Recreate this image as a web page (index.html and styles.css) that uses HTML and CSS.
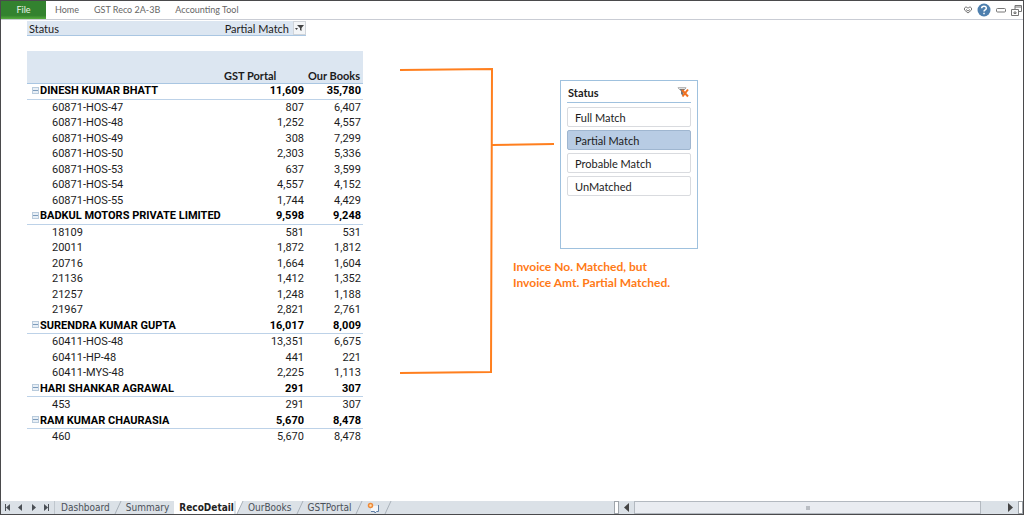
FILE: index.html
```html
<!DOCTYPE html>
<html lang="en">
<head>
<meta charset="utf-8">
<title>GST Reco 2A-3B</title>
<link rel="stylesheet" href="styles.css">
</head>
<body>
<div class="window">
  <header class="ribbon">
    <button class="file">File</button>
    <nav class="menu">
      <button>Home</button>
      <button>GST Reco 2A-3B</button>
      <button>Accounting Tool</button>
    </nav>
    <div class="tools">
      <button aria-label="Minimize ribbon"><svg width="8" height="8" viewBox="0 0 8 8" fill="none" stroke="#777"><path d="M.5 2 2 .8 4 2.200 6 .8 7.500 2V4L4 7 .5 4ZM2 3.500 4 5 6 3.500"/></svg></button>
      <button aria-label="Help"><svg width="14" height="14" viewBox="0 0 14 14"><circle cx="7" cy="7" r="6.500" fill="#4d7fae"/><path d="M4.700 5.300C4.700 2.500 9.300 2.500 9.300 5.200 9.300 6.900 7 6.700 7 8.500M7 9.700V11.200" fill="none" stroke="#fff" stroke-width="1.500"/></svg></button>
      <button aria-label="Minimize window"><svg width="10" height="6" viewBox="0 0 10 6"><rect x=".5" y="1.500" width="9" height="3.500" rx="1" fill="#fff" stroke="#777"/></svg></button>
      <button aria-label="Restore window"><svg width="11" height="11" viewBox="0 0 11 11" fill="#fff" stroke="#777"><path d="M4 .5H10.500V6.500H4Z"/><path d="M4 2H10.500"/><path d="M.5 4.500H7.500V10.500H.5Z"/><path d="M3 7H5V8.500H3Z"/></svg></button>
    </div>
  </header>

  <main class="sheet">
    <section class="pivot">
      <div class="filter">
        <span>Status</span>
        <span class="value">Partial Match</span>
        <button class="filter-button" aria-label="Filter status"><svg width="9" height="8" viewBox="0 0 9 8" fill="#444"><path d="M2 1H9L6.500 4V7L5 6V4ZM0 4H3L1.500 6Z"/></svg></button>
      </div>
      <table class="report">
        <colgroup><col class="c-name"><col class="c-portal"><col class="c-books"></colgroup>
        <thead><tr><th></th><th class="portal">GST Portal</th><th>Our Books</th></tr></thead>
        <tbody>
          <tr class="group"><th><button aria-label="Collapse"></button>DINESH KUMAR BHATT</th><td>11,609</td><td>35,780</td></tr>
          <tr><th>60871-HOS-47</th><td>807</td><td>6,407</td></tr>
          <tr><th>60871-HOS-48</th><td>1,252</td><td>4,557</td></tr>
          <tr><th>60871-HOS-49</th><td>308</td><td>7,299</td></tr>
          <tr><th>60871-HOS-50</th><td>2,303</td><td>5,336</td></tr>
          <tr><th>60871-HOS-53</th><td>637</td><td>3,599</td></tr>
          <tr><th>60871-HOS-54</th><td>4,557</td><td>4,152</td></tr>
          <tr><th>60871-HOS-55</th><td>1,744</td><td>4,429</td></tr>
          <tr class="group"><th><button aria-label="Collapse"></button>BADKUL MOTORS PRIVATE LIMITED</th><td>9,598</td><td>9,248</td></tr>
          <tr><th>18109</th><td>581</td><td>531</td></tr>
          <tr><th>20011</th><td>1,872</td><td>1,812</td></tr>
          <tr><th>20716</th><td>1,664</td><td>1,604</td></tr>
          <tr><th>21136</th><td>1,412</td><td>1,352</td></tr>
          <tr><th>21257</th><td>1,248</td><td>1,188</td></tr>
          <tr><th>21967</th><td>2,821</td><td>2,761</td></tr>
          <tr class="group"><th><button aria-label="Collapse"></button>SURENDRA KUMAR GUPTA</th><td>16,017</td><td>8,009</td></tr>
          <tr><th>60411-HOS-48</th><td>13,351</td><td>6,675</td></tr>
          <tr><th>60411-HP-48</th><td>441</td><td>221</td></tr>
          <tr><th>60411-MYS-48</th><td>2,225</td><td>1,113</td></tr>
          <tr class="group"><th><button aria-label="Collapse"></button>HARI SHANKAR AGRAWAL</th><td>291</td><td>307</td></tr>
          <tr><th>453</th><td>291</td><td>307</td></tr>
          <tr class="group"><th><button aria-label="Collapse"></button>RAM KUMAR CHAURASIA</th><td>5,670</td><td>8,478</td></tr>
          <tr><th>460</th><td>5,670</td><td>8,478</td></tr>
        </tbody>
      </table>
    </section>

    <section class="callout">
      <svg class="bracket" width="154" height="308" viewBox="0 0 154 308" fill="none" stroke="#ff7f1e" stroke-width="2"><path d="M0 3 92 2 91 305 0 306M92 78 154 77"/></svg>
      <div class="slicer">
        <div class="slicer-head">
          <h2>Status</h2>
          <button aria-label="Clear filter"><svg width="12" height="12" viewBox="0 0 12 12"><path d="M.5 1.500H9.500L6.500 5V10L4 8V5Z" fill="#777"/><path d="M2 2.500H8" stroke="#ddd"/><path d="M5 4 11 10.500M11 3.500 5.500 10.500" stroke="#f07020" stroke-width="2"/></svg></button>
        </div>
        <button class="item">Full Match</button>
        <button class="item selected" aria-pressed="true">Partial Match</button>
        <button class="item">Probable Match</button>
        <button class="item">UnMatched</button>
      </div>
      <p class="note">Invoice No. Matched, but<br>Invoice Amt. Partial Matched.</p>
    </section>
  </main>

  <footer class="tabbar">
    <div class="steps">
      <button aria-label="First sheet"><svg width="7" height="7" viewBox="0 0 7 7"><path d="M1 0H2V7H1ZM6 0V7L2 3.500Z"/></svg></button>
      <button aria-label="Previous sheet"><svg width="7" height="7" viewBox="0 0 7 7"><path d="M5 0V7L1 3.500Z"/></svg></button>
      <button aria-label="Next sheet"><svg width="7" height="7" viewBox="0 0 7 7"><path d="M2 0V7L6 3.500Z"/></svg></button>
      <button aria-label="Last sheet"><svg width="7" height="7" viewBox="0 0 7 7"><path d="M5 0H6V7H5ZM1 0V7L5 3.500Z"/></svg></button>
    </div>
    <div class="tabs">
      <button>Dashboard</button>
      <svg class="edge" width="8" height="13" viewBox="0 0 8 13"><path d="M1 13 7 0"/></svg>
      <button>Summary</button>
      <button class="active">RecoDetail</button>
      <svg class="edge" width="8" height="13" viewBox="0 0 8 13"><path class="white" d="M0 0H7L1 13H0Z"/><path d="M1 13 7 0"/></svg>
      <button>OurBooks</button>
      <svg class="edge" width="8" height="13" viewBox="0 0 8 13"><path d="M1 13 7 0"/></svg>
      <button>GSTPortal</button>
      <svg class="edge" width="8" height="13" viewBox="0 0 8 13"><path d="M1 13 7 0"/></svg>
      <button class="add" aria-label="Insert sheet"><svg width="13" height="12" viewBox="0 0 13 12"><path d="M4 4H11.500V9.500H10L8 11V9.500H4Z" fill="#f4f7fa"/><path d="M11.500 3V9.500H9.500L8 11 7.500 9.500H4" fill="none" stroke="#5f7fa6"/><circle cx="3.500" cy="3.500" r="2" fill="#ffe0b0" stroke="#ee8a3a" stroke-width="1.500"/></svg></button>
      <svg class="edge" width="8" height="13" viewBox="0 0 8 13"><path d="M1 13 7 0"/></svg>
    </div>
    <div class="scroll">
      <span class="split"></span>
      <button aria-label="Scroll left"><svg width="7" height="9" viewBox="0 0 7 9"><path d="M6 0V9L1 4.500Z"/></svg></button>
      <div class="track"><div class="thumb"><span></span></div></div>
      <button aria-label="Scroll right"><svg width="7" height="9" viewBox="0 0 7 9"><path d="M1 0V9L6 4.500Z"/></svg></button>
      <span class="split"></span>
    </div>
  </footer>
</div>
</body>
</html>
```
FILE: styles.css
```css
* { box-sizing: border-box; }
body { margin: 0; font: 11px/15px Lato, "Noto Sans", sans-serif; color: #1c1c1c; background: #fff; }
button { margin: 0; padding: 0; border: 0; background: none; font: inherit; color: inherit; display: flex; align-items: center; }
svg { display: block; flex: none; }
.window { min-height: 100vh; display: flex; flex-direction: column; border: 1px solid #4a4a4c; }

.ribbon { display: flex; height: 19px; border-bottom: 1px solid #c9ccd4; font: 9px/16px Lato, "Noto Sans", sans-serif; color: #666; }
.file { width: 45px; justify-content: center; background: linear-gradient(#33822f 80%, #55ac3c); color: #e8f3e6; }
.menu { display: flex; gap: 15px; padding-left: 9px; }
.tools { display: flex; align-items: center; gap: 5px; margin-left: auto; padding-right: 1px; }

.sheet { flex: 1; display: flex; align-items: flex-start; padding: 1px 0 0 26px; }
.pivot { width: 336px; flex: none; }
.filter { display: flex; width: 279px; height: 15px; padding-left: 2px; background: #dce6f1; border-bottom: 1px solid #a9c6e2; }
.filter .value { margin-left: auto; }
.filter-button { width: 13px; justify-content: center; margin-left: 4px; background: #f3f5f7; border: 1px solid #d0d4d9; }
.report { width: 100%; height: 394px; margin-top: 15px; border-collapse: collapse; table-layout: fixed; }
.c-portal { width: 84px; }
.c-books { width: 57px; }
.report th, .report td { padding: 0 2px 0 0; text-align: right; font-weight: 400; line-height: 14px; white-space: nowrap; }
.report thead tr { height: 32px; }
.report thead th { padding-right: 3px; background: #dce6f1; border-bottom: 1px solid #a9c6e2; vertical-align: bottom; font-weight: 700; }
.report thead .portal { text-align: left; padding-left: 2px; }
.report tbody { font-family: Roboto, "Noto Sans", sans-serif; }
.report tbody th { text-align: left; padding-left: 25px; }
.report .group th, .report .group td { font-weight: 700; border-bottom: 1px solid #bdd2e8; color: #000; }
.report .group th { padding-left: 5px; }
.report .group button { display: inline-block; vertical-align: middle; width: 7px; height: 7px; margin: 0 1px 2px 0; border: 1px solid #b9cbdc; background: linear-gradient(#e8eff6 40%, #7d9cbc 40% 60%, #e8eff6 60%); }

.callout { display: grid; grid-template-columns: 113px 47px 138px; grid-template-rows: auto 1fr; margin-left: 37px; padding-top: 46px; }
.bracket { grid-area: 1 / 1 / 3 / 3; }
.slicer { grid-area: 1 / 3; display: flex; flex-direction: column; gap: 3px; margin-top: 13px; min-height: 169px; padding: 1px 6px; border: 1px solid #9fc1de; }
.slicer-head { display: flex; justify-content: space-between; align-items: center; height: 21px; padding: 0 2px 0 1px; border-bottom: 1px solid #9fc1de; margin-bottom: 1px; }
.slicer h2 { margin: 0; font-size: 11px; }
.item { height: 20px; padding-left: 7px; border: 1px solid #d9dbdf; border-radius: 2px; background: #fff; }
.item.selected { background: #b8cce4; border-color: #9fb6d0; }
.note { grid-area: 2 / 2 / 3 / 4; margin: 10px 0 0; font-size: 12px; font-weight: 700; line-height: 16px; color: #ff7a17; }

.tabbar { display: flex; justify-content: space-between; height: 13px; background: #dbe1e7; font: 10px/14px "DejaVu Sans Condensed", "DejaVu Sans", sans-serif; color: #4a5058; }
.steps { display: flex; gap: 6px; padding: 0 4px 0 3px; border-right: 1px solid #bfc6cd; fill: #4a4f55; }
.tabs { display: flex; margin-right: auto; padding-left: 6px; }
.edge { fill: none; stroke: #a9b1b9; margin: 0 4px; }
.edge .white { fill: #fff; stroke: none; }
.active { background: #fff; font-weight: 700; color: #222; padding-left: 5px; margin-left: 5px; }
.active + .edge { margin-left: 2px; }
.scroll { display: flex; width: 40%; fill: #444; gap: 4px; }
.split { width: 5px; background: #fff; border: 1px solid #9fa5ab; }
.track { flex: 1; }
.thumb { width: 94%; height: 13px; display: flex; align-items: center; justify-content: center; background: #e9ecf1; border: 1px solid #b3b9c0; }
.thumb span { width: 4px; height: 4px; background: #b9bdc3; }
```
